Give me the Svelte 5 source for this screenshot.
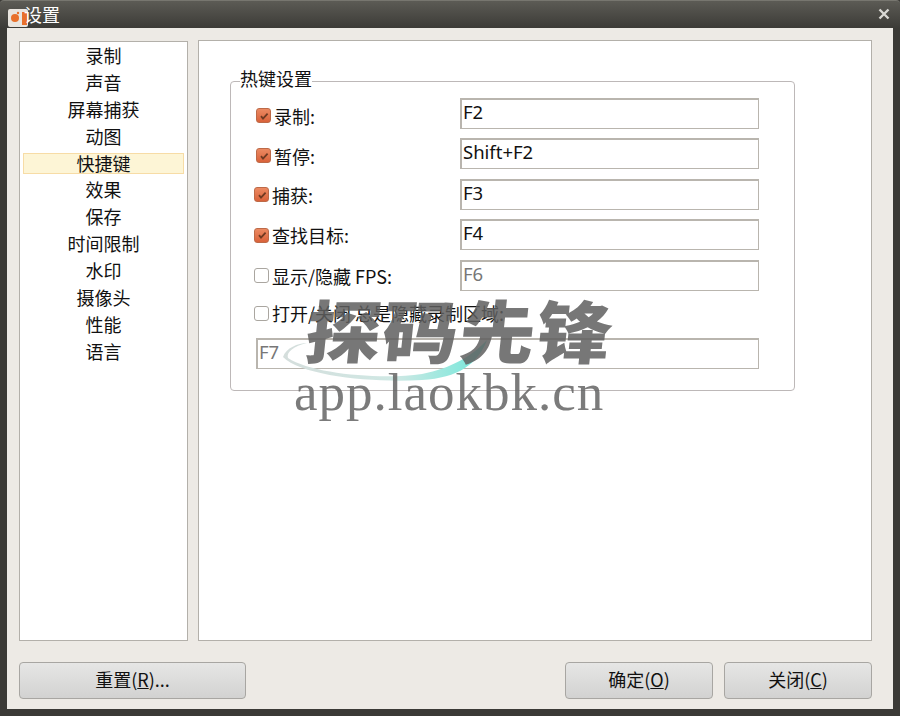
<script>
  const nav = ['录制','声音','屏幕捕获','动图','快捷键','效果','保存','时间限制','水印','摄像头','性能','语言'];
  const rows = [
    { label: '录制:', key: 'F2', on: true, inset: true },
    { label: '暂停:', key: 'Shift+F2', on: true, inset: true },
    { label: '捕获:', key: 'F3', on: true },
    { label: '查找目标:', key: 'F4', on: true },
    { label: '显示/隐藏 FPS:', key: 'F6', on: false }
  ];
</script>

<div class="window">
  <header class="titlebar">
    <svg class="appicon" width="20" height="18" viewBox="0 0 20 18">
      <rect x="0" y="0" width="20" height="18" rx="2" fill="#e9e5df"/>
      <circle cx="7" cy="9" r="4" fill="#e8702c"/>
      <circle cx="10" cy="4" r="1.2" fill="#e8702c"/>
      <rect x="14" y="3" width="5" height="13" fill="#e8702c"/>
    </svg>
    <span class="title">设置</span>
    <svg class="close" width="12" height="12" viewBox="0 0 12 12">
      <path d="M1.5 1.5 10.5 10.5M10.5 1.5 1.5 10.5" stroke="#d9d8d4" stroke-width="2.4"/>
    </svg>
  </header>

  <div class="body">
    <div class="columns">
      <nav class="sidebar">
        {#each nav as item, i}
          <div class="navitem" class:active={i === 4}>{item}</div>
        {/each}
      </nav>
      <main class="panel">
        <fieldset class="group">
          <legend>热键设置</legend>
          {#each rows as r}
            <div class="row">
              <label class="check" class:inset={r.inset}>
                <span class="box" class:on={r.on}>
                  {#if r.on}
                    <svg width="10" height="10" viewBox="0 0 10 10"><path d="M2 5.2 4 7.6 8.6 2.6" fill="none" stroke="#6f3a22" stroke-width="1.8"/></svg>
                  {/if}
                </span>
                <span>{r.label}</span>
              </label>
              <div class="field" class:dis={!r.on}>{r.key}</div>
            </div>
          {/each}
          <label class="check long"><span class="box"></span><span>打开/关闭 总是隐藏录制区域:</span></label>
          <div class="field wide dis">F7</div>
        </fieldset>
      </main>
    </div>
    <footer class="actions">
      <button class="btn reset">重置(<u>R</u>)...</button>
      <div class="right">
        <button class="btn">确定(<u>O</u>)</button>
        <button class="btn">关闭(<u>C</u>)</button>
      </div>
    </footer>
  </div>

  <div class="watermark">
    <svg class="swoosh" width="240" height="60" viewBox="0 0 240 60">
      <defs>
        <linearGradient id="sw" x1="0" x2="1" y1="0" y2="0">
          <stop offset="0" stop-color="#d5dedc"/>
          <stop offset="0.55" stop-color="#cfe8e4"/>
          <stop offset="1" stop-color="#6fe8da"/>
        </linearGradient>
      </defs>
      <path d="M1 27C4 18 16 13 25 13C12 16 4 22 6 28C30 44 100 50 140 44C170 38 190 26 205 10C196 34 176 48 140 50C90 53 20 46 1 27Z" fill="url(#sw)"/>
    </svg>
    <div class="wm-cn">探码先锋</div>
    <div class="wm-en">app.laokbk.cn</div>
  </div>
</div>

<style>
  :global(body) { margin: 0; }
  .window {
    position: relative;
    width: 900px;
    height: 716px;
    box-sizing: border-box;
    display: flex;
    flex-direction: column;
    background: #3b3a36;
    padding: 0 7px 7px;
    overflow: hidden;
    font-family: "Noto Sans CJK SC", "Noto Sans", sans-serif;
    font-size: 18px;
    color: #111;
  }
  .titlebar {
    height: 28px;
    margin: 0 -7px;
    flex: none;
    display: flex;
    align-items: center;
    box-sizing: border-box;
    padding: 1px 10px 0 8px;
    border-top: 1px solid #77766f;
    background: linear-gradient(#5c5b55, #3c3b37);
    border-radius: 4px 4px 0 0;
  }
  .appicon { margin-top: 6px; flex: none; }
  .title { color: #fff; font-size: 18px; margin-left: -4px; line-height: 20px; margin-top: -2px; }
  .close { margin-left: auto; margin-top: -3px; }
  .body {
    flex: 1;
    background: #edeae5;
    padding: 12px 21px 11px 12px;
    display: flex;
    flex-direction: column;
    min-height: 0;
  }
  .columns { display: flex; gap: 10px; height: 601px; flex: none; }
  .sidebar {
    width: 169px;
    box-sizing: border-box;
    background: #fff;
    border: 1px solid #b3b0aa;
    padding: 0 3px;
    margin-top: 1px;
  }
  .navitem {
    height: 27px;
    line-height: 25px;
    text-align: center;
    box-sizing: border-box;
    border: 1px solid transparent;
  }
  .active {
    background: #fdf5d6;
    border: 1px solid #f7dca6;
    height: 21px;
    line-height: 19px;
    margin: 3px 0 2px;
  }
  .panel {
    flex: 1;
    box-sizing: border-box;
    background: #fff;
    border: 1px solid #b3b0aa;
    padding: 27px 0 0 31px;
  }
  .group {
    margin: 0;
    width: 564px;
    height: 323px;
    box-sizing: border-box;
    border: 1px solid #bdb8b8;
    border-radius: 4px;
    padding: 0 35px 0 24px;
  }
  legend {
    padding: 0 0 6px;
    margin-left: -15px;
    line-height: 20px;
    font-size: 18px;
  }
  .row {
    display: flex;
    align-items: center;
    justify-content: space-between;
    height: 31px;
    margin-bottom: 9.4px;
  }
  .row:first-of-type { margin-top: 4px; }
  .check { display: flex; align-items: center; gap: 3px; line-height: 20px; }
  .check.inset { margin-left: 1px; margin-top: 4px; }
  .check.long { margin-top: 0; height: 27px; margin-left: -1px; }
  .row .check:not(.inset) { margin-left: -1px; margin-top: 1px; }
  .box {
    width: 13px;
    height: 13px;
    border: 1px solid #aaa6a0;
    border-radius: 3px;
    background: #fff;
    display: flex;
    align-items: center;
    justify-content: center;
    flex: none;
  }
  .box.on {
    background: linear-gradient(#ec8a62, #d9623a);
    border-color: #bd6a48;
  }
  .field {
    width: 299px;
    height: 31px;
    box-sizing: border-box;
    border: 2px solid #b9b5ae;
    border-right-width: 1px;
    border-bottom-width: 1px;
    background: #fff;
    padding-left: 1px;
    line-height: 24px;
    font-size: 18.5px;
    color: #111;
    font-family: "Noto Sans", sans-serif;
  }
  .field.dis { color: #777; }
  .field.wide { width: 503px; margin: 11px 0 0 1px; padding-left: 1px; }
  .actions {
    display: flex;
    justify-content: space-between;
    margin-top: 21px;
    padding-right: 0;
  }
  .right { display: flex; gap: 11px; }
  .btn {
    width: 148px;
    height: 37px;
    box-sizing: border-box;
    border: 1px solid #a8a6a2;
    border-radius: 4px;
    background: linear-gradient(#e6e6e5, #d2d2d1);
    font: inherit;
    font-size: 18px;
    line-height: 1;
    color: #111;
    padding: 0 0 3px;
  }
  .btn.reset { width: 227px; }
  .watermark {
    position: absolute;
    left: 282px;
    top: 330px;
    width: 340px;
    height: 100px;
    pointer-events: none;
  }
  .swoosh { position: absolute; left: 0; top: 0; }
  .wm-cn {
    position: absolute;
    left: 24px;
    top: -47px;
    font-family: "Noto Sans CJK SC", sans-serif;
    font-weight: 900;
    font-size: 76px;
    line-height: 90px;
    letter-spacing: 1px;
    white-space: nowrap;
    color: rgba(95, 95, 95, 0.85);
    transform: skewX(-6deg) scaleY(0.9);
  }
  .wm-en {
    position: absolute;
    left: 12px;
    top: 32px;
    font-family: "Liberation Serif", serif;
    font-size: 53px;
    line-height: 60px;
    letter-spacing: 1px;
    white-space: nowrap;
    color: rgba(100, 100, 100, 0.85);
  }
</style>
